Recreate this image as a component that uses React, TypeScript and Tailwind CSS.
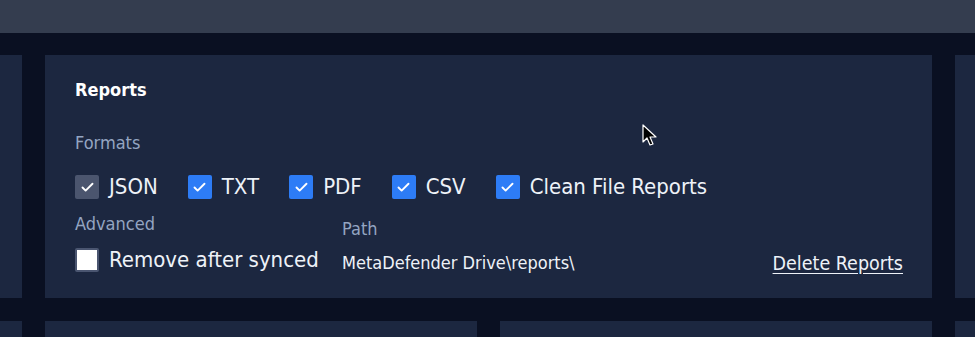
import { Check } from "lucide-react";

const font = { fontFamily: "'DejaVu Sans Condensed', 'DejaVu Sans', sans-serif" };

function Box({ checked, muted }: { checked: boolean; muted?: boolean }) {
  if (!checked) {
    return <span className="h-[24px] w-[24px] shrink-0 rounded-[2px] border-2 border-[#4a5570] bg-white" />;
  }
  return (
    <span
      className={`flex h-[24px] w-[24px] shrink-0 items-center justify-center rounded-[2px] ${
        muted ? "bg-[#4b556e]" : "bg-[#2d7cf6]"
      }`}
    >
      <Check className="h-[15px] w-[15px] text-white" strokeWidth={3} />
    </span>
  );
}

function Option({ label, checked = true, muted }: { label: string; checked?: boolean; muted?: boolean }) {
  return (
    <label className="flex items-center gap-[10px] text-[22px] leading-[24px] text-[#eef2f8]">
      <Box checked={checked} muted={muted} />
      <span>{label}</span>
    </label>
  );
}

export default function App() {
  return (
    <div className="relative h-[337px] w-[975px] overflow-hidden bg-[#0a1022] font-stretch-condensed" style={font}>
      <div className="h-[33px] bg-[#343d4f]" />

      <div className="mt-[22px] flex gap-[23px]">
        <div className="h-[243px] w-[22px] shrink-0 bg-[#1c2740]" />

        <section className="h-[243px] w-[887px] shrink-0 bg-[#1c2740] pl-[30px] pr-[29px] pt-[23px]">
          <h2 className="text-[18px] font-bold leading-[24px] text-white">Reports</h2>
          <p className="mt-[30px] text-[18px] leading-[22px] text-[#94a5c2]">Formats</p>

          <div className="mt-[21px] flex gap-[30px]">
            <Option label="JSON" muted />
            <Option label="TXT" />
            <Option label="PDF" />
            <Option label="CSV" />
            <Option label="Clean File Reports" />
          </div>

          <div className="mt-[14px] flex items-start">
            <div className="w-[267px]">
              <p className="text-[18px] leading-[22px] text-[#94a5c2]">Advanced</p>
              <div className="mt-[13px]">
                <Option label="Remove after synced" checked={false} />
              </div>
            </div>
            <div className="pt-[5px]">
              <p className="text-[18px] leading-[22px] text-[#94a5c2]">Path</p>
              <p className="mt-[12px] text-[18px] leading-[22px] text-[#eef2f8]">MetaDefender Drive\reports\</p>
            </div>
            <a className="ml-auto mt-[40px] text-[19.5px] leading-[22px] text-[#eef2f8] underline underline-offset-[3px]">
              Delete Reports
            </a>
          </div>
        </section>

        <div className="h-[243px] flex-1 bg-[#1c2740]" />
      </div>

      <div className="mt-[23px] flex gap-[23px]">
        <div className="h-[40px] w-[22px] shrink-0 bg-[#1c2740]" />
        <div className="h-[40px] w-[432px] shrink-0 bg-[#1c2740]" />
        <div className="h-[40px] w-[432px] shrink-0 bg-[#1c2740]" />
        <div className="h-[40px] flex-1 bg-[#1c2740]" />
      </div>

      <svg className="absolute left-[642px] top-[124px]" width="16" height="24" viewBox="0 0 16 24">
        <path d="M1 1 L1 18 L5 14 L8 21 L11 20 L8 13 L14 13 Z" fill="#000" stroke="#fff" strokeWidth="1.2" strokeLinejoin="round" />
      </svg>
    </div>
  );
}
